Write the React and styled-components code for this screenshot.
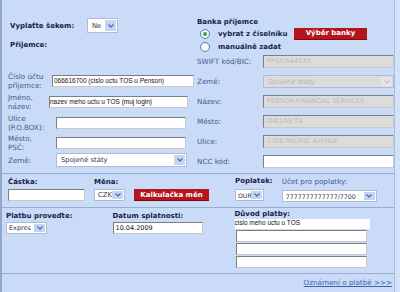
import React from "react";
import styled, { createGlobalStyle } from "styled-components";

const Global = createGlobalStyle`
  html, body { margin: 0; padding: 0; background: #d3e2fa; }
  body { font-family: "DejaVu Sans", Verdana, sans-serif; }
  * { box-sizing: border-box; }
`;

const Frame = styled.div`
  width: 395px;
  height: 292px;
  background: #c9dbf7;
  border-left: 2px solid #8fa7cd;
  border-right: 1px solid #a9bde0;
  display: flex;
  flex-direction: column;
`;

const Section = styled.div`
  height: ${(p) => p.$h}px;
  border-bottom: ${(p) => (p.$line ? "1px solid #98add3" : "none")};
  display: flex;
  position: relative;
`;

const Col = styled.div`
  width: ${(p) => p.$w}px;
  padding-left: ${(p) => p.$pl || 0}px;
  padding-top: ${(p) => p.$pt || 0}px;
  display: flex;
  flex-direction: column;
`;

const Row = styled.div`
  display: flex;
  align-items: center;
  height: ${(p) => p.$h}px;
  margin-top: ${(p) => p.$mt || 0}px;
  margin-left: ${(p) => p.$ml || 0}px;
`;

const Bold = styled.span`
  font-weight: bold;
  font-size: 7px;
  color: #16224a;
  white-space: nowrap;
  width: ${(p) => (p.$w ? p.$w + "px" : "auto")};
  flex: none;
`;

const Label = styled.span`
  font-size: 7.2px;
  line-height: 9px;
  color: #3d5b8c;
  width: ${(p) => p.$w}px;
  flex: none;
  white-space: nowrap;
`;

const Input = styled.div`
  width: ${(p) => p.$w}px;
  height: ${(p) => p.$h || 13}px;
  margin-left: ${(p) => p.$ml || 0}px;
  background: ${(p) => (p.$disabled ? "#dcdcdc" : "#fff")};
  border: ${(p) => (p.$plain ? "none" : "1px solid")};
  border-color: #7d7d7d #c9c9c9 #c9c9c9 #7d7d7d;
  font-family: ${(p) => (p.$disabled || p.$verdana ? '"DejaVu Sans", Verdana, sans-serif' : '"Liberation Sans", Arial, sans-serif')};
  font-size: 6.5px;
  color: ${(p) => (p.$disabled ? "#b9b9b9" : "#111")};
  line-height: ${(p) => (p.$h || 13) - 2}px;
  padding-left: ${(p) => p.$pad ?? 2}px;
  white-space: nowrap;
  overflow: hidden;
  flex: none;
`;

const SelectBox = styled.div`
  width: ${(p) => p.$w}px;
  height: ${(p) => p.$h || 13}px;
  margin-left: ${(p) => p.$ml || 0}px;
  background: ${(p) => (p.$disabled ? "#dcdcdc" : "#fff")};
  border: 1px solid #aebbd2;
  display: flex;
  align-items: center;
  font-size: ${(p) => p.$fs || 6.8}px;
  color: ${(p) => (p.$disabled ? "#b5b5b5" : "#2b3550")};
  padding-left: ${(p) => p.$pad ?? 4}px;
  white-space: nowrap;
  overflow: hidden;
  flex: none;
`;

const SelectText = styled.span`
  flex: 1;
  min-width: 0;
  overflow: hidden;
`;

const Arrow = styled.span`
  width: 11px;
  height: calc(100% - 2px);
  margin-right: 1px;
  background: ${(p) => (p.$disabled ? "#e4e4e4" : "#c5d4f3")};
  display: flex;
  align-items: center;
  justify-content: center;
  flex: none;
`;

const Select = ({ w, h, ml, fs, pad, disabled, children }) => (
  <SelectBox $w={w} $h={h} $ml={ml} $fs={fs} $pad={pad} $disabled={disabled}>
    <SelectText>{children}</SelectText>
    <Arrow $disabled={disabled}>
      <svg width="6" height="4" viewBox="0 0 6 4">
        <path d="M0.5 0.5 L3 3 L5.5 0.5" fill="none" stroke={disabled ? "#c8c8c8" : "#4d6fb8"} strokeWidth="1.3" />
      </svg>
    </Arrow>
  </SelectBox>
);

const RedButton = styled.div`
  width: ${(p) => p.$w}px;
  height: 12px;
  margin-left: ${(p) => p.$ml || 0}px;
  background: #b5141c;
  border-bottom: 1px solid #7e0a0f;
  color: #fff;
  font-weight: bold;
  font-size: 7px;
  display: flex;
  align-items: center;
  justify-content: center;
  flex: none;
`;

const Radio = styled.span`
  width: 10px;
  height: 10px;
  border-radius: 50%;
  border: 1px solid #5e7fb6;
  background: radial-gradient(circle, #fff 0%, #e6eefc 100%);
  display: flex;
  align-items: center;
  justify-content: center;
  margin-left: 3px;
  margin-right: 8px;
  flex: none;
  &::after {
    content: "";
    width: 4px;
    height: 4px;
    border-radius: 50%;
    background: ${(p) => (p.$on ? "#3aa53a" : "transparent")};
  }
`;

const Stack = styled.div`
  display: flex;
  flex-direction: column;
  margin-left: ${(p) => p.$ml || 0}px;
  margin-top: ${(p) => p.$mt || 0}px;
  gap: ${(p) => p.$gap || 0}px;
`;

const Footer = styled.div`
  flex: 1;
  display: flex;
  justify-content: flex-end;
  align-items: center;
  padding-right: 2px;
  padding-bottom: 1px;
`;

const Link = styled.a`
  font-size: 7.2px;
  color: #3a63ad;
  text-decoration: underline;
`;

const rightFields = [
  { label: "SWIFT kód/BIC:", value: "PPSIUS44XXX", disabled: true },
  { label: "Země:", value: "Spojené státy", disabled: true, select: true },
  { label: "Název:", value: "PENSON FINANCIAL SERVICES", disabled: true },
  { label: "Město:", value: "DALLAS TX", disabled: true },
  { label: "Ulice:", value: "1700 PACIFIC AVENUE", disabled: true },
  { label: "NCC kód:", value: "", disabled: false },
];

export default function App() {
  return (
    <>
      <Global />
      <Frame>
        <Section $h={174} $line>
          <Col $w={191} $pl={6}>
            <Row $h={15} $mt={18} $ml={2}>
              <Bold $w={77}>Vyplaťte šekem:</Bold>
              <Select w={31} h={15}>Ne</Select>
            </Row>
            <Row $h={11} $mt={6} $ml={2}>
              <Bold>Příjemce:</Bold>
            </Row>
            <Row $h={18} $mt={22}>
              <Label $w={44}>Číslo účtu<br />příjemce:</Label>
              <Input $w={142} $h={12} $pad={1}>066616700 (cislo uctu TOS u Penson)</Input>
            </Row>
            <Row $h={18} $mt={3}>
              <Label $w={41}>Jméno,<br />název:</Label>
              <Input $w={139} $h={12} $pad={0}>nazev meho uctu u TOS (muj login)</Input>
            </Row>
            <Row $h={19} $mt={2}>
              <Label $w={48}>Ulice<br />(P.O.BOX):</Label>
              <Input $w={130} $h={12} />
            </Row>
            <Row $h={19} $mt={1}>
              <Label $w={48}>Město,<br />PSČ:</Label>
              <Input $w={130} $h={12} />
            </Row>
            <Row $h={14} $mt={1}>
              <Label $w={48}>Země:</Label>
              <Select w={131} h={14}>Spojené státy</Select>
            </Row>
          </Col>
          <Col $w={200} $pl={4} $pt={17}>
            <Row $h={10}>
              <Bold>Banka příjemce</Bold>
            </Row>
            <Row $h={13}>
              <Radio $on />
              <Bold $w={76}>vybrat z číselníku</Bold>
              <RedButton $w={73}>Výběr banky</RedButton>
            </Row>
            <Row $h={13}>
              <Radio />
              <Bold>manuálně zadat</Bold>
            </Row>
            {rightFields.map((f, i) => (
              <Row key={i} $h={13} $mt={i === 0 ? 2 : 7}>
                <Label $w={66}>{f.label}</Label>
                {f.select ? (
                  <Select w={131} h={13} disabled>{f.value}</Select>
                ) : (
                  <Input $w={131} $disabled={f.disabled} $pad={3}>{f.value}</Input>
                )}
              </Row>
            ))}
          </Col>
        </Section>

        <Section $h={34} $line>
          <Stack $ml={6} $mt={4} $gap={3}>
            <Bold>Částka:</Bold>
            <Input $w={77} $h={12} />
          </Stack>
          <Stack $ml={9} $mt={4} $gap={3}>
            <Bold>Měna:</Bold>
            <Row $h={12}>
              <Select w={31} h={12} pad={3}>CZK</Select>
              <RedButton $w={75} $ml={9}>Kalkulačka měn</RedButton>
            </Row>
          </Stack>
          <Stack $ml={26} $mt={3} $gap={4}>
            <Bold>Poplatek:</Bold>
            <Select w={29} h={12} fs={6.2} pad={2}>OUR</Select>
          </Stack>
          <Stack $ml={9} $mt={3} $gap={4}>
            <Label $w={95}>Účet pro poplatky:</Label>
            <Select w={95} h={12} fs={6.3} pad={3}>7777777777777/7700</Select>
          </Stack>
        </Section>

        <Section $h={66} $line>
          <Stack $ml={4} $mt={4} $gap={2}>
            <Bold>Platbu proveďte:</Bold>
            <Select w={41} h={12} fs={6.5} pad={2}>Expres</Select>
          </Stack>
          <Stack $ml={40} $mt={4} $gap={2}>
            <Bold>Datum splatnosti:</Bold>
            <Input $w={90} $h={12} $pad={2} $verdana>10.04.2009</Input>
          </Stack>
          <Stack $ml={32} $mt={2} $gap={1}>
            <Bold>Důvod platby:</Bold>
            <Input $w={135} $h={10} $plain $pad={0}>cislo meho uctu u TOS</Input>
            <Input $w={131} $h={12} $ml={1} />
            <Input $w={131} $h={12} $ml={1} />
            <Input $w={131} $h={12} $ml={1} />
          </Stack>
        </Section>

        <Footer>
          <Link>Oznámení o platbě &gt;&gt;&gt;</Link>
        </Footer>
      </Frame>
    </>
  );
}
